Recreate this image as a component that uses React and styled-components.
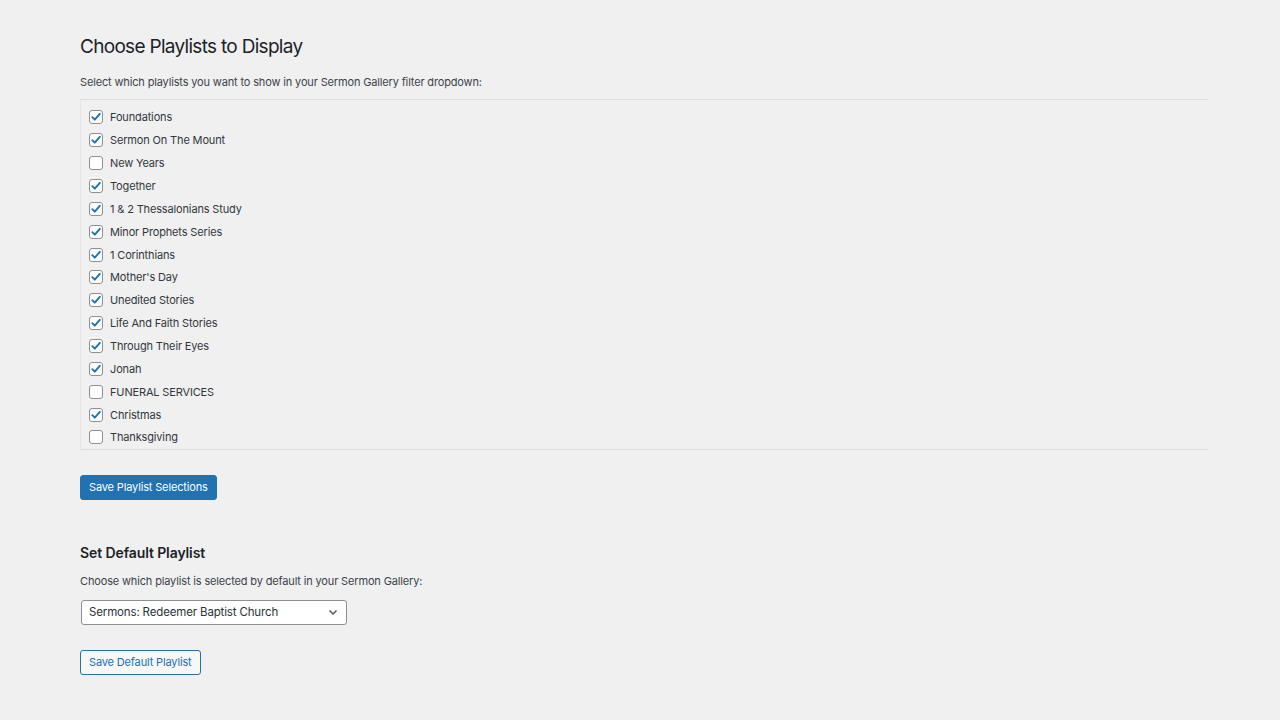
import React from "react";
import styled, { createGlobalStyle } from "styled-components";

const GlobalStyle = createGlobalStyle`
  html, body {
    margin: 0;
    padding: 0;
    background: #f0f0f1;
  }
  body {
    font-family: Inter, "Noto Sans", sans-serif;
    color: #3c434a;
  }
`;

const Page = styled.div`
  width: 1280px;
  height: 720px;
  padding: 34px 72px 0 80px;
  box-sizing: border-box;
`;

const Title = styled.h2`
  margin: 0;
  font-size: 19px;
  font-weight: 400;
  letter-spacing: -0.7px;
  color: #1d2327;
  line-height: 26px;
`;

const Description = styled.p`
  margin: ${(p) => p.$top}px 0 0;
  font-size: 11px;
  letter-spacing: -0.15px;
  line-height: 16px;
  color: #3c434a;
`;

const ListBox = styled.div`
  margin-top: 9px;
  border-top: 1px solid #dcdcde;
  border-bottom: 1px solid #dcdcde;
  border-left: 1px solid #e4e4e6;
  padding: 6px 8px 0;
  display: flex;
  flex-direction: column;
`;

const Row = styled.label`
  display: flex;
  align-items: center;
  gap: 7px;
  height: 22.86px;
  font-size: 11px;
  letter-spacing: -0.15px;
  color: #32373c;
`;

const Box = styled.span`
  width: 14px;
  height: 14px;
  box-sizing: border-box;
  border: 1px solid #8c8f94;
  border-radius: 3px;
  background: #fff;
  display: flex;
  align-items: center;
  justify-content: center;
`;

const PrimaryButton = styled.button`
  margin-top: 25px;
  height: 25px;
  padding: 0 8px;
  background: #2271b1;
  border: 1px solid #2271b1;
  border-radius: 3px;
  color: #fff;
  font-family: inherit;
  font-size: 11px;
  letter-spacing: -0.15px;
`;

const SubTitle = styled.h3`
  margin: 44px 0 0;
  font-size: 14px;
  font-weight: 600;
  letter-spacing: -0.1px;
  color: #1d2327;
  line-height: 18px;
`;

const Select = styled.div`
  margin-top: 11px;
  margin-left: 1px;
  width: 266px;
  height: 25px;
  box-sizing: border-box;
  border: 1px solid #8c8f94;
  border-radius: 3px;
  background: #fff;
  display: flex;
  align-items: center;
  justify-content: space-between;
  padding: 0 6px 0 7px;
  font-size: 11.5px;
  letter-spacing: -0.15px;
  color: #2c3338;
`;

const SecondaryButton = styled.button`
  display: block;
  margin-top: 25px;
  height: 25px;
  padding: 0 8px;
  background: #f6f7f7;
  border: 1px solid #2271b1;
  border-radius: 3px;
  color: #2271b1;
  font-family: inherit;
  font-size: 11px;
  letter-spacing: -0.15px;
`;

const playlists = [
  ["Foundations", true],
  ["Sermon On The Mount", true],
  ["New Years", false],
  ["Together", true],
  ["1 & 2 Thessalonians Study", true],
  ["Minor Prophets Series", true],
  ["1 Corinthians", true],
  ["Mother's Day", true],
  ["Unedited Stories", true],
  ["Life And Faith Stories", true],
  ["Through Their Eyes", true],
  ["Jonah", true],
  ["FUNERAL SERVICES", false],
  ["Christmas", true],
  ["Thanksgiving", false],
];

function Check({ on }) {
  return (
    <Box>
      {on && (
        <svg width="12" height="12" viewBox="0 0 12 12">
          <path
            d="M2.3 6.2 L4.8 8.7 L9.8 2.8"
            fill="none"
            stroke="#2271b1"
            strokeWidth="1.9"
            strokeLinecap="round"
            strokeLinejoin="round"
          />
        </svg>
      )}
    </Box>
  );
}

export default function App() {
  return (
    <Page>
      <GlobalStyle />
      <Title>Choose Playlists to Display</Title>
      <Description $top={14}>
        Select which playlists you want to show in your Sermon Gallery filter
        dropdown:
      </Description>
      <ListBox>
        {playlists.map(([name, on]) => (
          <Row key={name}>
            <Check on={on} />
            {name}
          </Row>
        ))}
      </ListBox>
      <PrimaryButton>Save Playlist Selections</PrimaryButton>
      <SubTitle>Set Default Playlist</SubTitle>
      <Description $top={11}>
        Choose which playlist is selected by default in your Sermon Gallery:
      </Description>
      <Select>
        <span>Sermons: Redeemer Baptist Church</span>
        <svg width="14" height="14" viewBox="0 0 14 14">
          <path
            d="M3.5 5.5 L7 9 L10.5 5.5"
            fill="none"
            stroke="#50575e"
            strokeWidth="1.5"
          />
        </svg>
      </Select>
      <SecondaryButton>Save Default Playlist</SecondaryButton>
    </Page>
  );
}
